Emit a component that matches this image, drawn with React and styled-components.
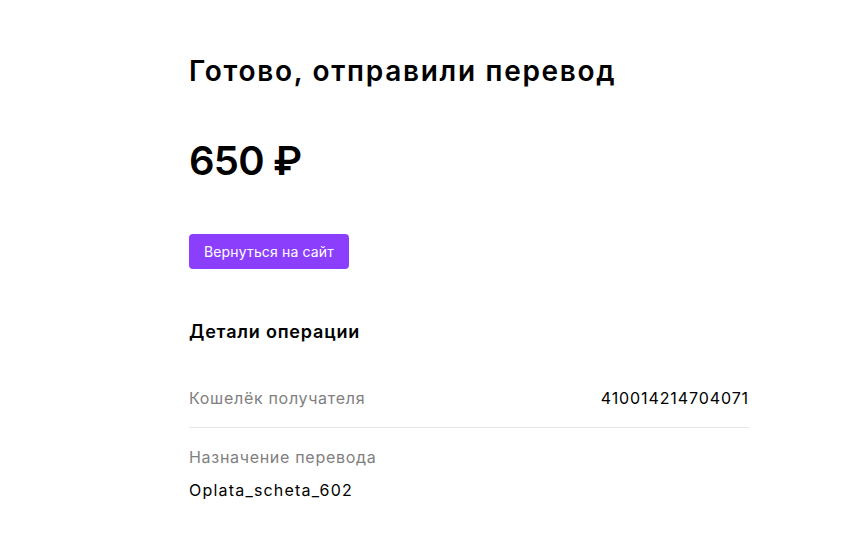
import styled, { createGlobalStyle } from "styled-components";

const GlobalStyle = createGlobalStyle`
  body {
    margin: 0;
    background: #fff;
    font-family: Inter, "Noto Sans", sans-serif;
    color: #000;
  }
`;

const Page = styled.div`
  padding: 53px 0 0 189px;
`;

const Content = styled.div`
  width: 560px;
  display: flex;
  flex-direction: column;
`;

const Title = styled.h1`
  margin: 0;
  font-size: 28px;
  line-height: 36px;
  font-weight: 600;
  letter-spacing: 1.7px;
`;

const Amount = styled.div`
  margin-top: 48px;
  font-size: 40px;
  line-height: 48px;
  font-weight: 600;
  letter-spacing: -0.8px;
`;

const Button = styled.button`
  align-self: flex-start;
  margin-top: 49px;
  height: 35px;
  padding: 0 15px;
  border: none;
  border-radius: 4px;
  background: #8b3ffd;
  color: #fff;
  font-family: inherit;
  font-size: 14px;
  letter-spacing: 0.15px;
  cursor: pointer;
`;

const SectionTitle = styled.h2`
  margin: 51px 0 0;
  font-size: 18px;
  line-height: 24px;
  font-weight: 600;
  letter-spacing: 0.8px;
`;

const Row = styled.div`
  display: flex;
  flex-direction: ${(p) => (p.$stacked ? "column" : "row")};
  justify-content: space-between;
  gap: ${(p) => (p.$stacked ? "9px" : "0")};
  padding: ${(p) => (p.$stacked ? "17px 0" : "18px 0 17px")};
  border-bottom: ${(p) => (p.$divider ? "1px solid #e6e6e6" : "none")};
  font-size: 16px;
  line-height: 24px;
  letter-spacing: 0.7px;
`;

const Label = styled.span`
  color: #808080;
`;

const Value = styled.span`
  color: #000;
  letter-spacing: ${(p) => (p.$wide ? "1.2px" : "0.9px")};
`;

const Details = styled.div`
  margin-top: 24px;
`;

export default function App() {
  return (
    <>
      <GlobalStyle />
      <Page>
        <Content>
          <Title>Готово, отправили перевод</Title>
          <Amount>650 ₽</Amount>
          <Button>Вернуться на сайт</Button>
          <SectionTitle>Детали операции</SectionTitle>
          <Details>
            <Row $divider>
              <Label>Кошелёк получателя</Label>
              <Value>410014214704071</Value>
            </Row>
            <Row $stacked>
              <Label>Назначение перевода</Label>
              <Value $wide>Oplata_scheta_602</Value>
            </Row>
          </Details>
        </Content>
      </Page>
    </>
  );
}
